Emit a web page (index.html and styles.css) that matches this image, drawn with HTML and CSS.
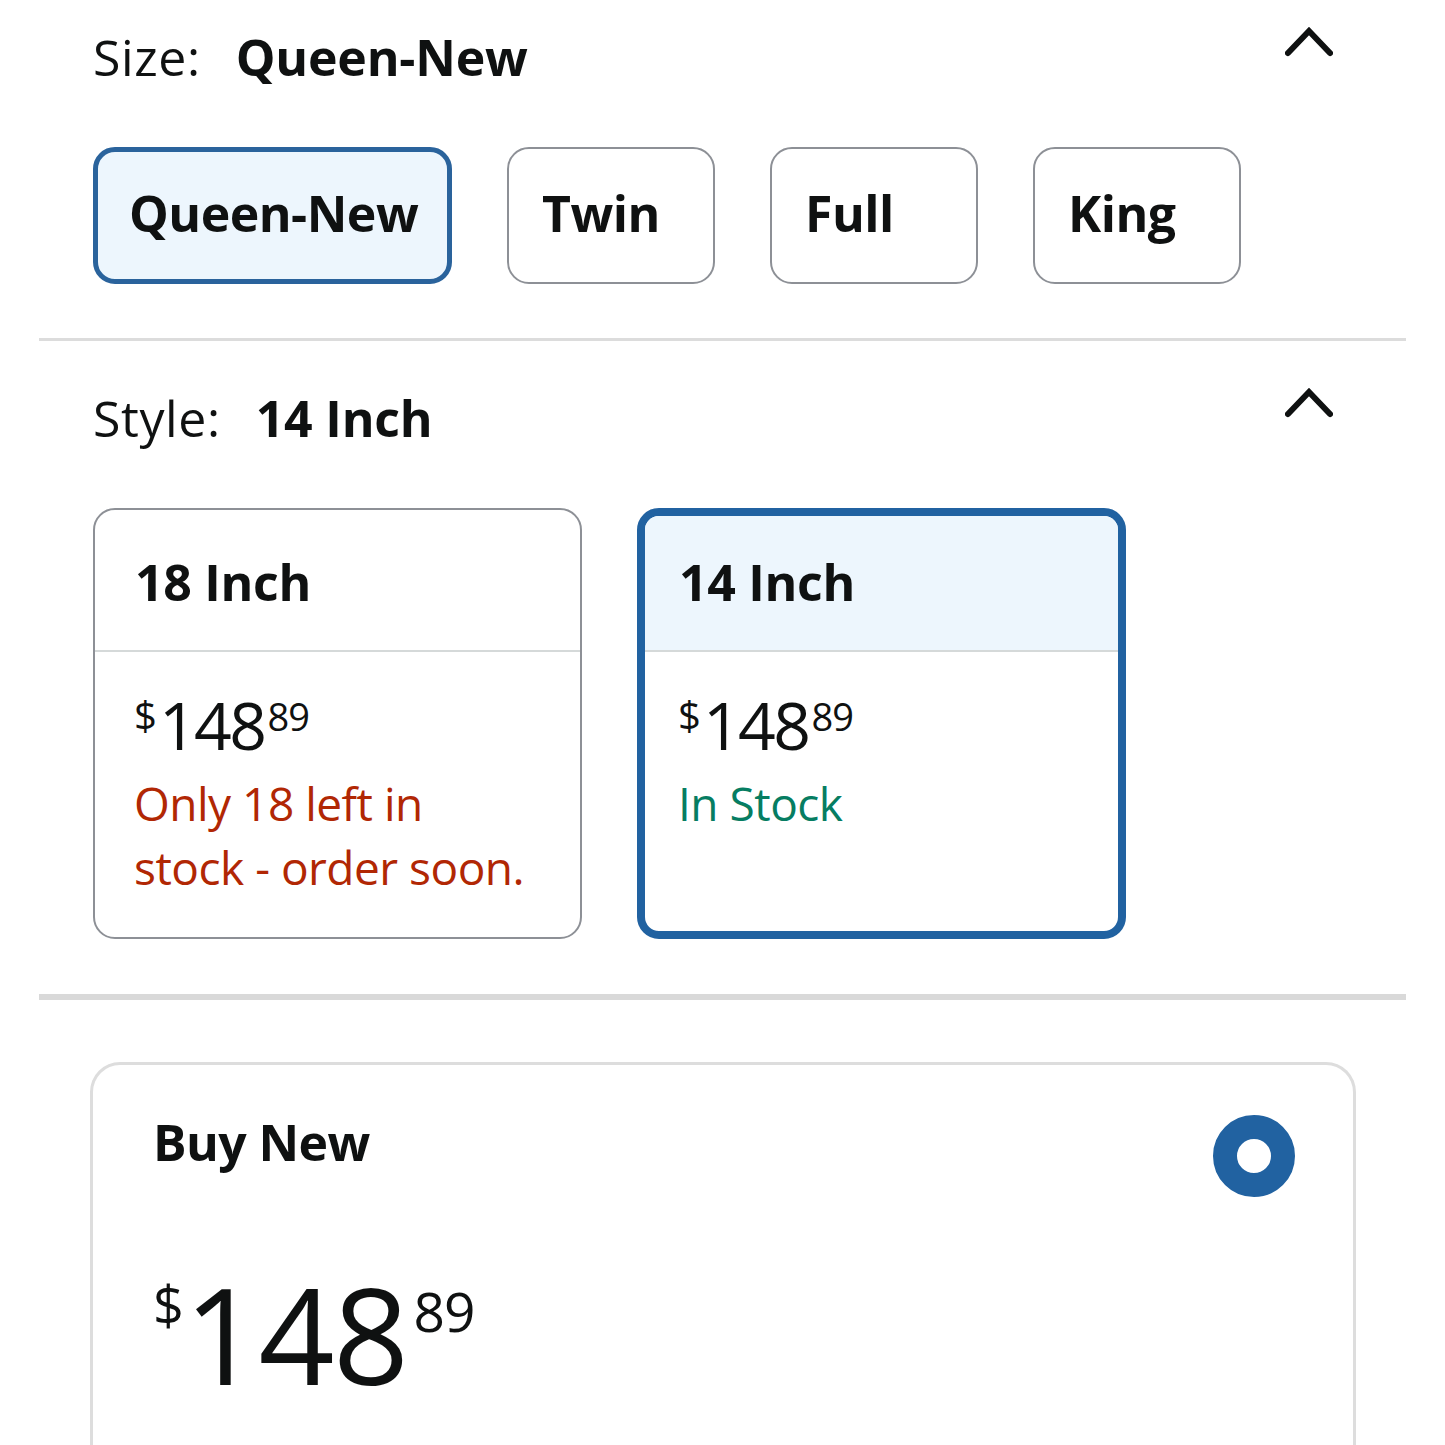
FILE: index.html
```html
<!DOCTYPE html>
<html lang="en">
<head>
<meta charset="utf-8">
<title>Product options</title>
<link rel="stylesheet" href="styles.css">
</head>
<body>
<div class="page">
  <section class="section section-size">
    <div class="sec-head">
      <div class="sec-title"><span class="label">Size:</span><span class="value">Queen-New</span></div>
      <svg class="chev" viewBox="0 0 48 32" width="48" height="32" aria-hidden="true"><polyline points="3,28 24,6 45,28" fill="none" stroke="#0f1111" stroke-width="6" stroke-linecap="round" stroke-linejoin="miter"/></svg>
    </div>
    <div class="btn-row">
      <div class="opt-btn selected">Queen-New</div>
      <div class="opt-btn">Twin</div>
      <div class="opt-btn">Full</div>
      <div class="opt-btn">King</div>
    </div>
  </section>
  <hr class="divider thin">
  <section class="section section-style">
    <div class="sec-head">
      <div class="sec-title"><span class="label">Style:</span><span class="value">14 Inch</span></div>
      <svg class="chev" viewBox="0 0 48 32" width="48" height="32" aria-hidden="true"><polyline points="3,28 24,6 45,28" fill="none" stroke="#0f1111" stroke-width="6" stroke-linecap="round" stroke-linejoin="miter"/></svg>
    </div>
    <div class="card-row">
      <div class="style-card">
        <div class="card-head">18 Inch</div>
        <div class="card-body">
          <div class="price"><span class="cur">$</span><span class="whole">148</span><span class="frac">89</span></div>
          <div class="stock low">Only 18 left in stock - order soon.</div>
        </div>
      </div>
      <div class="style-card selected">
        <div class="card-head">14 Inch</div>
        <div class="card-body">
          <div class="price"><span class="cur">$</span><span class="whole">148</span><span class="frac">89</span></div>
          <div class="stock in">In Stock</div>
        </div>
      </div>
    </div>
  </section>
  <hr class="divider thick">
  <div class="buy-card">
    <div class="buy-head">
      <div class="buy-title">Buy New</div>
      <div class="radio"></div>
    </div>
    <div class="big-price"><span class="cur">$</span><span class="whole">148</span><span class="frac">89</span></div>
  </div>
</div>
</body>
</html>
```
FILE: styles.css
```css
* { box-sizing: border-box; }
html, body { margin: 0; padding: 0; background: #ffffff; }
body {
  font-family: "Open Sans", "Noto Sans", "Liberation Sans", sans-serif;
  color: #0f1111;
  height: 1445px;
  overflow: hidden;
}
.page { padding: 0 39px; }
.section { padding: 0 74px 0 54px; }
.section-size { padding-top: 27px; padding-bottom: 54px; }
.section-style { padding-top: 47px; padding-bottom: 55px; }
.sec-head {
  display: flex;
  justify-content: space-between;
  align-items: flex-start;
}
.sec-title { font-size: 50px; line-height: 60px; }
.sec-title .label { font-weight: 400; letter-spacing: 0.6px; }
.sec-title .value { font-weight: 700; margin-left: 35px; letter-spacing: -0.2px; }
.chev { display: block; margin-top: -2px; margin-right: -1px; }

.btn-row { display: flex; gap: 55px; margin-top: 60px; }
.opt-btn {
  height: 137px;
  width: 208px;
  padding: 0 20px 6px 33px;
  border: 2px solid #8d9096;
  border-radius: 22px;
  display: flex;
  align-items: center;
  justify-content: flex-start;
  font-size: 50px;
  line-height: 60px;
  font-weight: 700;
  letter-spacing: -0.5px;
  white-space: nowrap;
}
.opt-btn.selected {
  border: 5px solid #2a639c;
  background: #edf6fd;
  padding: 0 20px 6px 31px;
  width: 359px;
}

.divider { border: 0; margin: 0; background: #dcdcdc; }
.divider.thin { height: 3px; }
.divider.thick { height: 6px; background: #d9d9d9; }

.card-row { display: flex; gap: 55px; margin-top: 60px; }
.style-card {
  width: 489px;
  height: 431px;
  border: 2px solid #8d9096;
  border-radius: 22px;
  overflow: hidden;
  display: flex;
  flex-direction: column;
}
.style-card.selected { border: 8px solid #2162a1; }
.card-head {
  font-size: 50px;
  line-height: 60px;
  font-weight: 700;
  letter-spacing: -0.3px;
  padding: 42px 20px 38px 40px;
  border-bottom: 2px solid #d5d9d9;
}
.style-card.selected .card-head {
  background: #edf6fd;
  padding: 36px 20px 38px 34px;
}
.card-body { padding: 39px 20px 30px 39px; }
.style-card.selected .card-body { padding-left: 33px; }
.price { display: flex; align-items: flex-start; line-height: 1; }
.price .cur { font-size: 40px; margin-top: 4px; margin-right: 2px; }
.price .whole { font-size: 66px; letter-spacing: -2.5px; }
.price .frac { font-size: 38px; margin-top: 6px; margin-left: 3px; letter-spacing: -1px; }
.stock { font-size: 46px; line-height: 64px; margin-top: 14px; letter-spacing: -0.5px; max-width: 396px; }
.stock.low { color: #b12704; }
.stock.in { color: #067d62; }

.buy-card {
  margin: 62px 50px 0 51px;
  height: 420px;
  border: 3px solid #dddddd;
  border-bottom: 0;
  border-radius: 30px 30px 0 0;
  padding: 47px 58px 0 60px;
}
.buy-head { display: flex; justify-content: space-between; align-items: flex-start; }
.buy-title { font-size: 50px; line-height: 60px; font-weight: 700; letter-spacing: -0.6px; }
.radio {
  width: 82px;
  height: 82px;
  border-radius: 50%;
  border: 24px solid #2162a1;
  background: #ffffff;
  margin-top: 3px;
}
.big-price { display: flex; align-items: flex-start; line-height: 1; margin-top: 70px; }
.big-price .cur { font-size: 54px; margin-top: 10px; margin-right: 0; }
.big-price .whole { font-size: 133px; letter-spacing: -1.5px; }
.big-price .frac { font-size: 55px; margin-top: 16px; margin-left: 6px; letter-spacing: -1px; }
```
